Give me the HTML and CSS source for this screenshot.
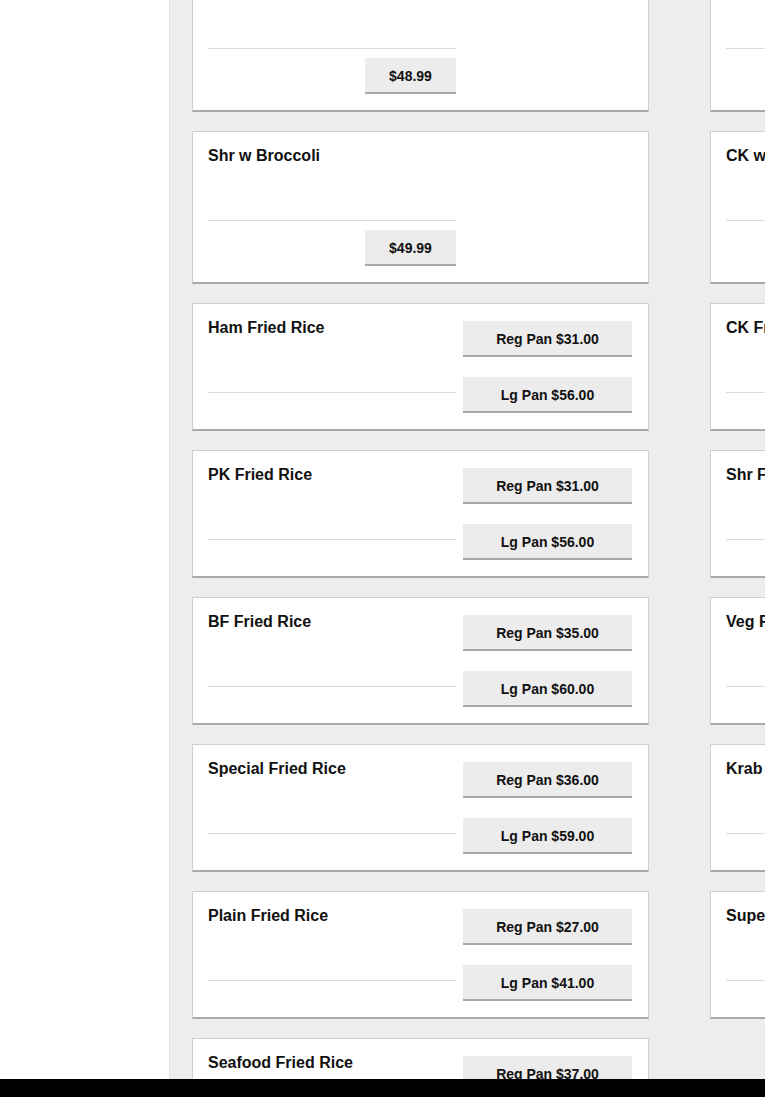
FILE: index.html
```html
<!DOCTYPE html>
<html lang="en">
<head>
    <meta charset="UTF-8">
    <meta name="viewport" content="width=device-width, initial-scale=1.0">
    <title>Menu - Fried Rice</title>
    <link rel="stylesheet" href="styles.css">
</head>
<body>
    <div class="page">
        <aside class="sidebar"></aside>

        <main class="menu">
            <div class="menu-grid">
                <!-- row 1 (scrolled, only the bottom shows) -->
                <div class="item">
                    <div class="item-info">
                        <div class="item-name">Shr w Mixed Veg</div>
                        <div class="item-foot"><button class="price">$48.99</button></div>
                    </div>
                </div>
                <div class="item">
                    <div class="item-info">
                        <div class="item-name">CK w Mixed Veg</div>
                        <div class="item-foot"><button class="price">$44.99</button></div>
                    </div>
                </div>

                <div class="item">
                    <div class="item-info">
                        <div class="item-name">Shr w Broccoli</div>
                        <div class="item-foot"><button class="price">$49.99</button></div>
                    </div>
                </div>
                <div class="item">
                    <div class="item-info">
                        <div class="item-name">CK w Broccoli</div>
                        <div class="item-foot"><button class="price">$44.99</button></div>
                    </div>
                </div>

                <div class="item">
                    <div class="item-info">
                        <div class="item-name">Ham Fried Rice</div>
                        <div class="item-foot"></div>
                    </div>
                    <div class="item-sizes">
                        <button class="size">Reg Pan $31.00</button>
                        <button class="size">Lg Pan $56.00</button>
                    </div>
                </div>
                <div class="item">
                    <div class="item-info">
                        <div class="item-name">CK Fried Rice</div>
                        <div class="item-foot"></div>
                    </div>
                    <div class="item-sizes">
                        <button class="size">Reg Pan $31.00</button>
                        <button class="size">Lg Pan $56.00</button>
                    </div>
                </div>

                <div class="item">
                    <div class="item-info">
                        <div class="item-name">PK Fried Rice</div>
                        <div class="item-foot"></div>
                    </div>
                    <div class="item-sizes">
                        <button class="size">Reg Pan $31.00</button>
                        <button class="size">Lg Pan $56.00</button>
                    </div>
                </div>
                <div class="item">
                    <div class="item-info">
                        <div class="item-name">Shr Fried Rice</div>
                        <div class="item-foot"></div>
                    </div>
                    <div class="item-sizes">
                        <button class="size">Reg Pan $35.00</button>
                        <button class="size">Lg Pan $60.00</button>
                    </div>
                </div>

                <div class="item">
                    <div class="item-info">
                        <div class="item-name">BF Fried Rice</div>
                        <div class="item-foot"></div>
                    </div>
                    <div class="item-sizes">
                        <button class="size">Reg Pan $35.00</button>
                        <button class="size">Lg Pan $60.00</button>
                    </div>
                </div>
                <div class="item">
                    <div class="item-info">
                        <div class="item-name">Veg Fried Rice</div>
                        <div class="item-foot"></div>
                    </div>
                    <div class="item-sizes">
                        <button class="size">Reg Pan $27.00</button>
                        <button class="size">Lg Pan $41.00</button>
                    </div>
                </div>

                <div class="item">
                    <div class="item-info">
                        <div class="item-name">Special Fried Rice</div>
                        <div class="item-foot"></div>
                    </div>
                    <div class="item-sizes">
                        <button class="size">Reg Pan $36.00</button>
                        <button class="size">Lg Pan $59.00</button>
                    </div>
                </div>
                <div class="item">
                    <div class="item-info">
                        <div class="item-name">Krab Fried Rice</div>
                        <div class="item-foot"></div>
                    </div>
                    <div class="item-sizes">
                        <button class="size">Reg Pan $33.00</button>
                        <button class="size">Lg Pan $58.00</button>
                    </div>
                </div>

                <div class="item">
                    <div class="item-info">
                        <div class="item-name">Plain Fried Rice</div>
                        <div class="item-foot"></div>
                    </div>
                    <div class="item-sizes">
                        <button class="size">Reg Pan $27.00</button>
                        <button class="size">Lg Pan $41.00</button>
                    </div>
                </div>
                <div class="item">
                    <div class="item-info">
                        <div class="item-name">Super Fried Rice</div>
                        <div class="item-foot"></div>
                    </div>
                    <div class="item-sizes">
                        <button class="size">Reg Pan $38.00</button>
                        <button class="size">Lg Pan $62.00</button>
                    </div>
                </div>

                <div class="item">
                    <div class="item-info">
                        <div class="item-name">Seafood Fried Rice</div>
                        <div class="item-foot"></div>
                    </div>
                    <div class="item-sizes">
                        <button class="size">Reg Pan $37.00</button>
                        <button class="size">Lg Pan $62.00</button>
                    </div>
                </div>
            </div>
        </main>
    </div>

    <footer class="bottom-bar"></footer>
</body>
</html>
```

FILE: styles.css
```css
html, body {
    margin: 0;
    padding: 0;
    height: 100%;
    overflow: hidden;
}
body {
    font-family: "Liberation Sans", Arial, sans-serif;
    color: #111;
    background-color: #fff;
}
.page {
    display: flex;
    min-height: 100%;
}
.sidebar {
    flex: 0 0 169px;
    background-color: #fff;
}
.menu {
    flex: 1 0 auto;
    background-color: #ededed;
    border-left: 1px solid #e4e4e4;
    padding: 0 0 40px 22px;
}
/* page is scrolled down a little in the screenshot */
.menu-grid {
    display: grid;
    grid-template-columns: 457px 457px;
    column-gap: 61px;
    row-gap: 19px;
    margin-top: -41px;
}
.item {
    display: grid;
    grid-template-columns: 248px 1fr;
    column-gap: 7px;
    align-items: start;
    box-sizing: border-box;
    background-color: #fff;
    border: 1px solid #cfcfcf;
    border-bottom: 2px solid #a9a9a9;
    padding: 17px 16px 16px 15px;
}
.item-info {
    display: flex;
    flex-direction: column;
}
.item-name {
    height: 74px;
    margin-top: -2px;
    box-sizing: border-box;
    font-size: 16px;
    font-weight: bold;
    line-height: 18px;
    border-bottom: 1px solid #dcdcdc;
}
.item-foot {
    display: flex;
    justify-content: flex-end;
}
.item-foot:not(:empty) {
    padding-top: 9px;
}
.item-sizes {
    display: flex;
    flex-direction: column;
    gap: 20px;
}
button {
    font-family: inherit;
    font-size: 14px;
    font-weight: bold;
    color: #111;
    background-color: #ececec;
    border: none;
    border-bottom: 2px solid #a8a8a8;
    border-radius: 0;
    height: 36px;
    padding: 2px 0 0;
    cursor: pointer;
}
.price {
    width: 91px;
}
.size {
    width: 100%;
}
.bottom-bar {
    position: fixed;
    left: 0;
    right: 0;
    bottom: 0;
    height: 18px;
    background-color: #000;
}
```
